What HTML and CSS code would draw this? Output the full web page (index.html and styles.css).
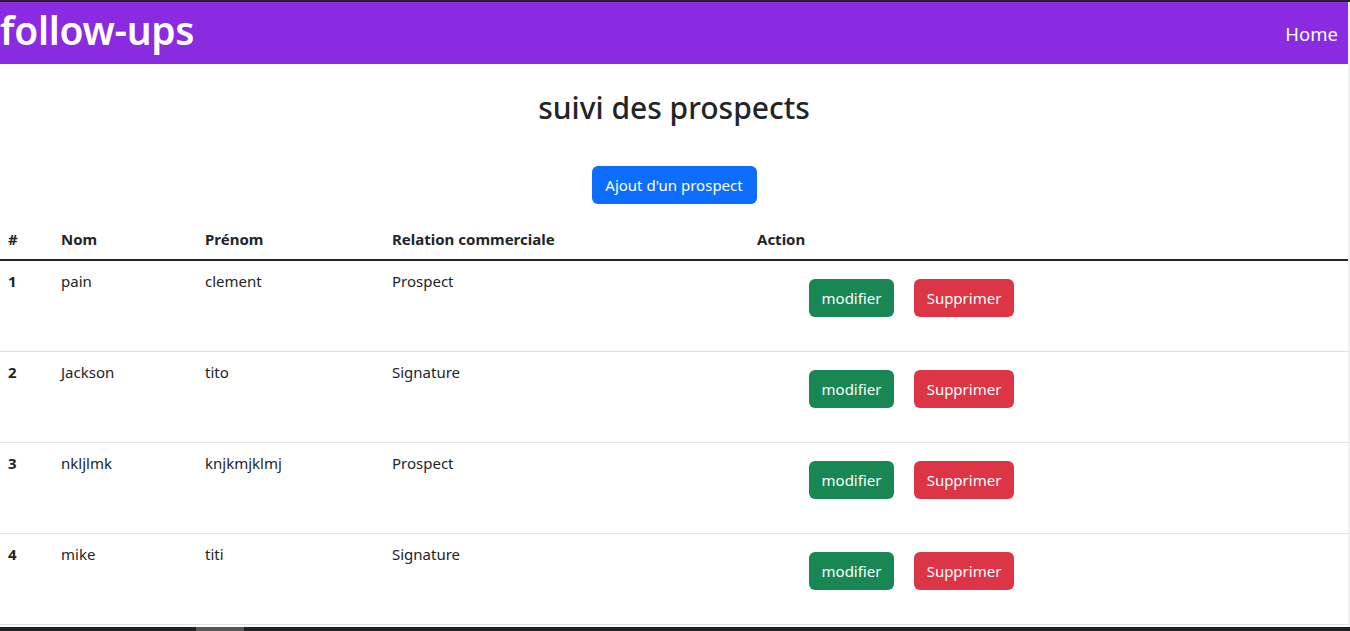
FILE: index.html
```html
<!DOCTYPE html>
<html lang="fr">
<head>
<meta charset="utf-8">
<title>follow-ups</title>
<link rel="stylesheet" href="styles.css">
</head>
<body>
<div class="topline"></div>
<div class="viewport">
  <div class="page">
    <nav class="navbar">
      <a class="brand" href="#">follow-ups</a>
      <a class="nav-link" href="#">Home</a>
    </nav>
    <main class="main">
      <h1 class="title">suivi des prospects</h1>
      <div class="add-wrap"><a class="btn btn-primary" href="#">Ajout d'un prospect</a></div>
      <table class="table">
        <thead>
          <tr>
            <th class="c-id">#</th>
            <th class="c-nom">Nom</th>
            <th class="c-prenom">Prénom</th>
            <th class="c-rel">Relation commerciale</th>
            <th class="c-act">Action</th>
          </tr>
        </thead>
        <tbody>
          <tr>
            <th>1</th><td>pain</td><td>clement</td><td>Prospect</td>
            <td><div class="actions"><a class="btn btn-success btn-edit" href="#">modifier</a><a class="btn btn-danger btn-del" href="#">Supprimer</a></div></td>
          </tr>
          <tr>
            <th>2</th><td>Jackson</td><td>tito</td><td>Signature</td>
            <td><div class="actions"><a class="btn btn-success btn-edit" href="#">modifier</a><a class="btn btn-danger btn-del" href="#">Supprimer</a></div></td>
          </tr>
          <tr>
            <th>3</th><td>nkljlmk</td><td>knjkmjklmj</td><td>Prospect</td>
            <td><div class="actions"><a class="btn btn-success btn-edit" href="#">modifier</a><a class="btn btn-danger btn-del" href="#">Supprimer</a></div></td>
          </tr>
          <tr>
            <th>4</th><td>mike</td><td>titi</td><td>Signature</td>
            <td><div class="actions"><a class="btn btn-success btn-edit" href="#">modifier</a><a class="btn btn-danger btn-del" href="#">Supprimer</a></div></td>
          </tr>
        </tbody>
      </table>
    </main>
  </div>
  <div class="vbar"></div>
</div>
<div class="hbar"><div class="hthumb"></div></div>
</body>
</html>
```
FILE: styles.css
```css
* { box-sizing: border-box; }
html, body { margin: 0; padding: 0; }
body {
  width: 1350px;
  height: 631px;
  overflow: hidden;
  font-family: "Noto Sans", "Open Sans", "Liberation Sans", sans-serif;
  font-size: 16px;
  line-height: 24px;
  color: #212529;
  background: #fff;
}
.topline { height: 2px; background: #222326; }
.viewport { display: flex; height: 625px; }
.page { width: 1348px; display: flex; flex-direction: column; }
.vbar { width: 2px; background: #eeeeee; }
.hbar { height: 4px; background: #1f2023; padding-left: 196px; }
.hthumb { width: 48px; height: 4px; background: #565656; }

.navbar {
  height: 62px;
  background: #8a2be2;
  display: flex;
  align-items: center;
  justify-content: space-between;
}
.brand {
  color: #fff;
  text-decoration: none;
  font-size: 39px;
  font-weight: 600;
  line-height: 48px;
  letter-spacing: -0.3px;
  padding-left: 0;
  margin-top: -7px;
}
.nav-link {
  color: #fff;
  text-decoration: none;
  font-size: 18.5px;
  padding-right: 10px;
  margin-top: 2px;
}

.main { display: flex; flex-direction: column; }
.title {
  margin: 26px 0 0;
  text-align: center;
  font-size: 30px;
  line-height: 36px;
  font-weight: 500;
}
.add-wrap { display: flex; justify-content: center; margin-top: 40px; }
.btn {
  display: inline-flex;
  align-items: center;
  justify-content: center;
  height: 38px;
  padding: 0 12px;
  border-radius: 6px;
  color: #fff;
  text-decoration: none;
  font-size: 15px;
}
.btn-primary { background: #0d6efd; width: 165px; }
.btn-success { background: #198754; }
.btn-danger { background: #dc3545; }
.btn-edit { width: 85px; }
.btn-del { width: 100px; }

.table {
  margin-top: 15px;
  width: 1348px;
  border-collapse: collapse;
  font-size: 15px;
}
.table th, .table td {
  padding: 8px;
  text-align: left;
  vertical-align: top;
  line-height: 24px;
}
.table th { font-weight: 700; }
.table thead th { height: 40px; border-bottom: 2px solid #212529; }
.table tbody td, .table tbody th { font-weight: 400; border-bottom: 1px solid #dee2e6; }
.table tbody th { font-weight: 700; }
.c-id { width: 53px; }
.c-nom { width: 144px; }
.c-prenom { width: 187px; }
.c-rel { width: 365px; }
.actions {
  display: flex;
  gap: 20px;
  padding-left: 52px;
  margin: 10px 0 26px;
}
```
